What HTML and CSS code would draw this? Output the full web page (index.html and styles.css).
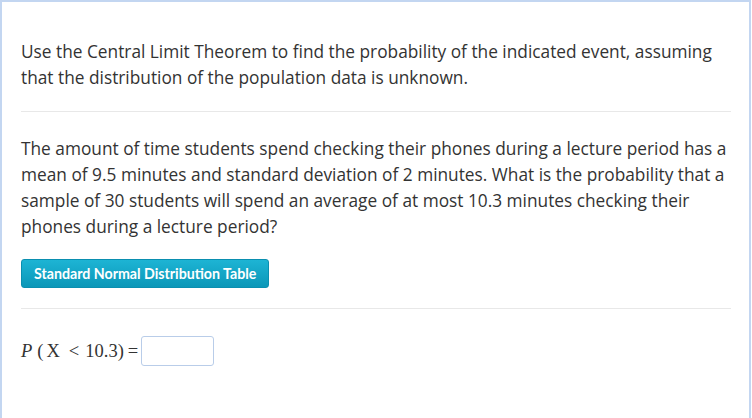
FILE: index.html
```html
<!DOCTYPE html>
<html>
<head>
<meta charset="utf-8">
<link rel="stylesheet" href="styles.css">
</head>
<body>
<div class="frame">
  <p class="intro">Use the Central Limit Theorem to find the probability of the indicated event, assuming that the distribution of the population data is unknown.</p>
  <hr class="rule">
  <p class="question">The amount of time students spend checking their phones during a lecture period has a mean of 9.5 minutes and standard deviation of 2 minutes. What is the probability that a sample of 30 students will spend an average of at most 10.3 minutes checking their phones during a lecture period?</p>
  <button class="table-btn">Standard Normal Distribution Table</button>
  <hr class="rule rule-2">
  <div class="answer">
    <span class="math"><i>P</i><span class="paren">(</span><span class="var">X</span><span class="lt">&lt;</span>10.3<span class="eq">)</span><span class="eqs">=</span></span>
    <span class="input"></span>
  </div>
</div>
</body>
</html>
```

FILE: styles.css
```css
html, body {
  margin: 0;
  padding: 0;
  background: #fff;
}
.frame {
  box-sizing: border-box;
  width: 751px;
  height: 418px;
  border: 2px solid #c3d6f1;
  border-bottom: none;
  padding: 37px 18px 0 19px;
  font-family: "Open Sans", sans-serif;
  color: #333;
}
.intro {
  margin: 0;
  font-size: 17.3px;
  line-height: 26px;
}
.rule {
  border: none;
  border-top: 1px solid #e8e8e8;
  margin: 20px 0 0;
}
.question {
  margin: 24px 0 0;
  font-size: 17.3px;
  line-height: 26px;
}
.table-btn {
  display: block;
  margin-top: 19px;
  height: 29px;
  padding: 0 12px;
  border: 1px solid #0a8fb0;
  border-radius: 3px;
  background: linear-gradient(#1db4d4, #0b97b8);
  color: #fff;
  font-family: "Lato", sans-serif;
  font-weight: 700;
  font-size: 14.2px;
}
.rule-2 {
  margin-top: 20px;
}
.answer {
  display: flex;
  align-items: center;
  gap: 3px;
  margin-top: 27px;
}
.math {
  font-family: "Liberation Serif", serif;
  font-size: 18.5px;
  color: #333;
}
.paren {
  margin-left: 5px;
}
.var {
  margin-left: 3px;
}
.lt {
  margin: 0 6px 0 9px;
}
.eqs {
  margin-left: 4px;
}
.input {
  width: 71px;
  height: 28px;
  border: 1.5px solid #b9cde9;
  border-radius: 3px;
}
```
